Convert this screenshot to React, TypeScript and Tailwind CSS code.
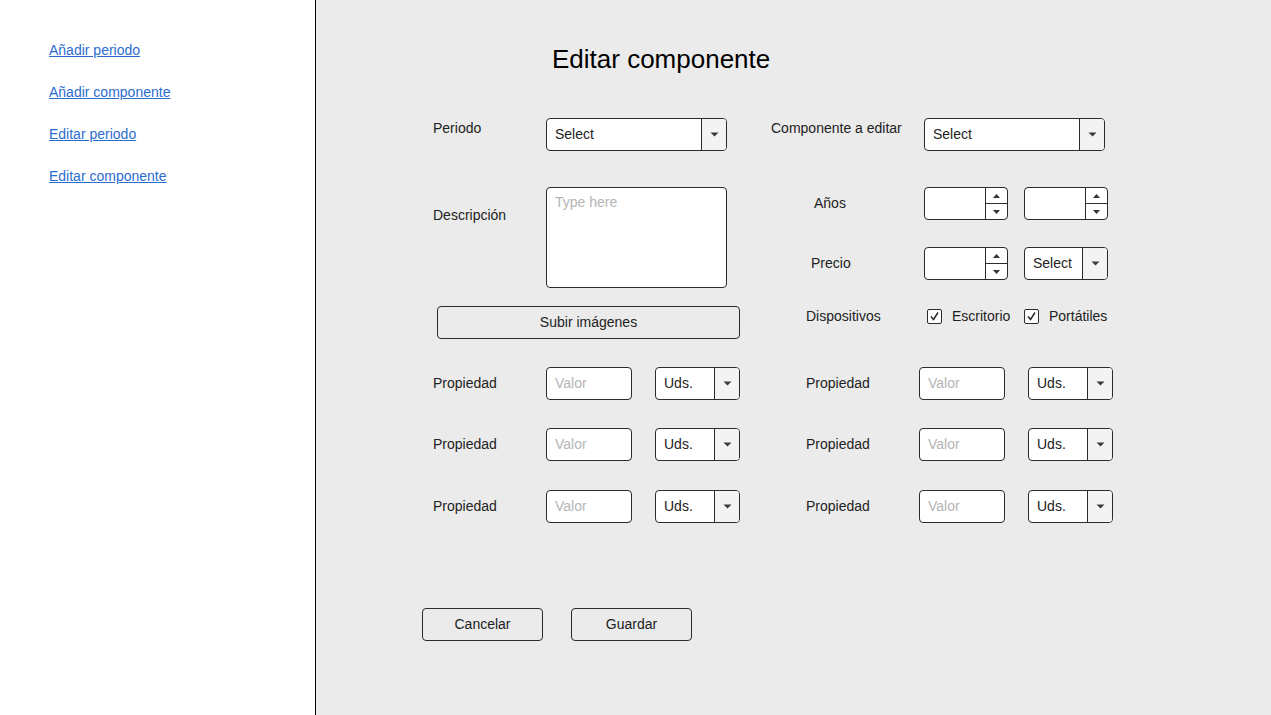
import React from 'react';

const font = { fontFamily: '"Liberation Sans", Arial, sans-serif' };

function Caret() {
  return (
    <svg width="9" height="5" viewBox="0 0 9 5">
      <path d="M0.5 0.5 L8.5 0.5 L4.5 4.5 Z" fill="#3a3a3a" />
    </svg>
  );
}

function SelectBox({ label, width, arrow }: { label: string; width: string; arrow: string }) {
  return (
    <div className={`${width} h-[33px] flex bg-white border border-[#2b2b2b] rounded-[4px] overflow-hidden`}>
      <div className="flex-1 flex items-center pl-[8px] text-[14px] text-[#222]">{label}</div>
      <div className={`${arrow} flex items-center justify-center border-l border-[#2b2b2b] bg-[#f3f3f3]`}>
        <Caret />
      </div>
    </div>
  );
}

function Spinner() {
  return (
    <div className="w-[84px] h-[33px] flex bg-white border border-[#2b2b2b] rounded-[4px] overflow-hidden">
      <div className="flex-1" />
      <div className="w-[22px] flex flex-col border-l border-[#2b2b2b]">
        <div className="flex-1 flex items-center justify-center border-b border-[#2b2b2b]">
          <svg width="7" height="4" viewBox="0 0 7 4">
            <path d="M0 4 L7 4 L3.5 0 Z" fill="#333" />
          </svg>
        </div>
        <div className="flex-1 flex items-center justify-center">
          <svg width="7" height="4" viewBox="0 0 7 4">
            <path d="M0 0 L7 0 L3.5 4 Z" fill="#333" />
          </svg>
        </div>
      </div>
    </div>
  );
}

function Check() {
  return (
    <div className="w-[15px] h-[15px] border border-[#2b2b2b] rounded-[2px] bg-white flex items-center justify-center">
      <svg width="11" height="11" viewBox="0 0 11 11">
        <path d="M2 5.5 L4.5 8.5 L9 1.5" fill="none" stroke="#222" strokeWidth="1.4" />
      </svg>
    </div>
  );
}

function ValueInput() {
  return (
    <div className="w-[86px] h-[33px] flex items-center pl-[8px] bg-white border border-[#2b2b2b] rounded-[4px] text-[14px] text-[#b5b5b5]">
      Valor
    </div>
  );
}

function PropRow({ labelClass, top }: { labelClass: string; top: string }) {
  return (
    <div className={`${top} flex items-center h-[33px]`}>
      <div className={`${labelClass} text-[14px] text-[#222]`}>Propiedad</div>
      <ValueInput />
      <div className="ml-[23px]">
        <SelectBox label="Uds." width="w-[85px]" arrow="w-[25px]" />
      </div>
    </div>
  );
}

const links = ['Añadir periodo', 'Añadir componente', 'Editar periodo', 'Editar componente'];

export default function App() {
  return (
    <div className="flex h-screen w-full" style={font}>
      {/* Sidebar */}
      <aside className="w-[316px] shrink-0 bg-white border-r border-black pt-[42px] pl-[49px] flex flex-col gap-[26px]">
        {links.map((l) => (
          <a key={l} href="#" className="text-[14px] leading-[16px] text-[#2b6cd0] underline">
            {l}
          </a>
        ))}
      </aside>

      {/* Main */}
      <main className="flex-1 bg-[#ebebeb] pt-[45px] pl-[117px]">
        <h1 className="ml-[119px] text-[26px] leading-[28px] text-black">Editar componente</h1>

        <div className="mt-[45px] flex">
          {/* Left column */}
          <div className="w-[307px] flex flex-col">
            <div className="flex h-[33px]">
              <div className="w-[113px] pt-[2px] text-[14px] leading-[16px] text-[#222]">Periodo</div>
              <SelectBox label="Select" width="w-[181px]" arrow="w-[25px]" />
            </div>
            <div className="mt-[36px] flex">
              <div className="w-[113px] pt-[20px] text-[14px] leading-[16px] text-[#222]">Descripción</div>
              <div className="w-[181px] h-[101px] bg-white border border-[#2b2b2b] rounded-[4px] pl-[8px] pt-[6px] text-[14px] leading-[16px] text-[#b5b5b5]">
                Type here
              </div>
            </div>
            <button className="mt-[18px] ml-[4px] w-[303px] h-[33px] border border-[#2b2b2b] rounded-[4px] text-[14px] text-[#222]">
              Subir imágenes
            </button>
            <PropRow labelClass="w-[113px]" top="mt-[28px]" />
            <PropRow labelClass="w-[113px]" top="mt-[28px]" />
            <PropRow labelClass="w-[113px]" top="mt-[29px]" />
          </div>

          {/* Right column */}
          <div className="ml-[31px] flex flex-col">
            <div className="flex h-[33px]">
              <div className="w-[153px] pt-[2px] text-[14px] leading-[16px] text-[#222]">Componente a editar</div>
              <SelectBox label="Select" width="w-[181px]" arrow="w-[25px]" />
            </div>
            <div className="mt-[36px] flex items-center h-[33px]">
              <div className="w-[153px] pl-[43px] text-[14px] text-[#222]">Años</div>
              <Spinner />
              <div className="ml-[16px]">
                <Spinner />
              </div>
            </div>
            <div className="mt-[27px] flex items-center h-[33px]">
              <div className="w-[153px] pl-[40px] text-[14px] text-[#222]">Precio</div>
              <Spinner />
              <div className="ml-[16px]">
                <SelectBox label="Select" width="w-[84px]" arrow="w-[25px]" />
              </div>
            </div>
            <div className="mt-[20px] flex items-center h-[33px]">
              <div className="w-[156px] pl-[35px] text-[14px] text-[#222]">Dispositivos</div>
              <div className="w-[97px] flex items-center gap-[10px]">
                <Check />
                <span className="text-[14px] text-[#222]">Escritorio</span>
              </div>
              <div className="flex items-center gap-[10px]">
                <Check />
                <span className="text-[14px] text-[#222]">Portátiles</span>
              </div>
            </div>
            <PropRow labelClass="w-[148px] pl-[35px]" top="mt-[34px]" />
            <PropRow labelClass="w-[148px] pl-[35px]" top="mt-[28px]" />
            <PropRow labelClass="w-[148px] pl-[35px]" top="mt-[29px]" />
          </div>
        </div>

        <div className="mt-[85px] -ml-[11px] flex gap-[28px]">
          <button className="w-[121px] h-[33px] border border-[#2b2b2b] rounded-[4px] text-[14px] text-[#222]">
            Cancelar
          </button>
          <button className="w-[121px] h-[33px] border border-[#2b2b2b] rounded-[4px] text-[14px] text-[#222]">
            Guardar
          </button>
        </div>
      </main>
    </div>
  );
}
